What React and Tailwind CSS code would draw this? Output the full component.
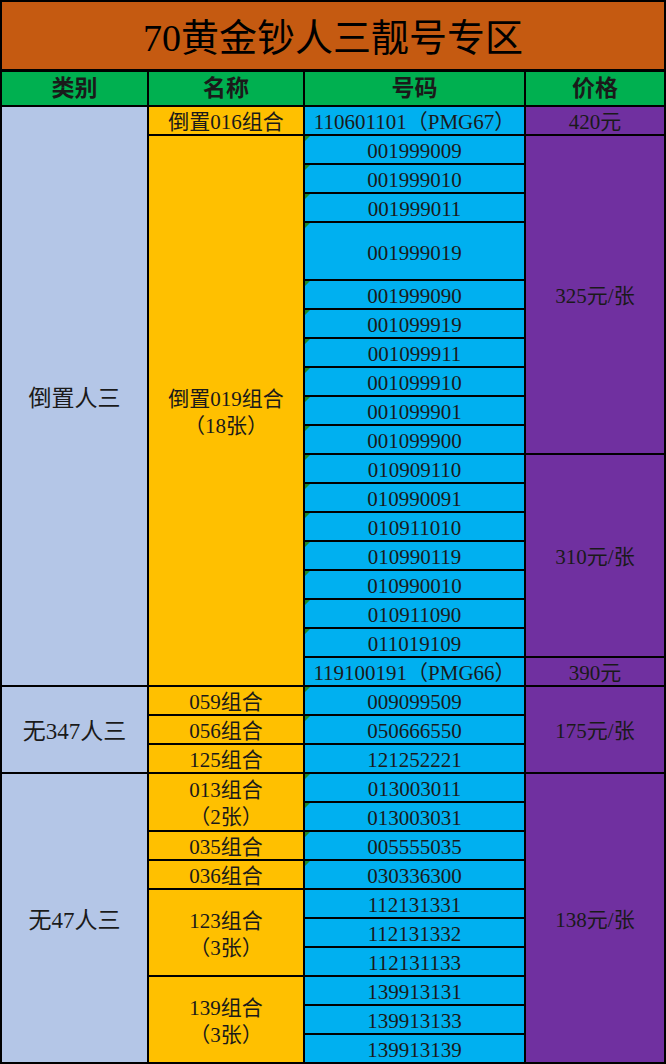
const rows = [
  { cls: "col-start-1 row-span-20 bg-[#b4c6e7] text-[23px]", text: "倒置人三" },
  { cls: "col-start-2 bg-[#ffc000]", text: "倒置016组合" },
  { cls: "col-start-3 bg-[#00b0f0]", text: "110601101（PMG67）" },
  { cls: "col-start-4 bg-[#7030a0]", text: "420元" },
  { cls: "col-start-2 row-span-19 bg-[#ffc000]", text: "倒置019组合", sub: "（18张）" },
  { cls: "col-start-3 bg-[#00b0f0]", text: "001999009", mark: true },
  { cls: "col-start-4 row-span-11 bg-[#7030a0]", text: "325元/张" },
  { cls: "col-start-3 bg-[#00b0f0]", text: "001999010", mark: true },
  { cls: "col-start-3 bg-[#00b0f0]", text: "001999011", mark: true },
  { cls: "col-start-3 row-span-2 bg-[#00b0f0]", text: "001999019", mark: true },
  { cls: "col-start-3 bg-[#00b0f0]", text: "001999090", mark: true },
  { cls: "col-start-3 bg-[#00b0f0]", text: "001099919", mark: true },
  { cls: "col-start-3 bg-[#00b0f0]", text: "001099911", mark: true },
  { cls: "col-start-3 bg-[#00b0f0]", text: "001099910", mark: true },
  { cls: "col-start-3 bg-[#00b0f0]", text: "001099901", mark: true },
  { cls: "col-start-3 bg-[#00b0f0]", text: "001099900", mark: true },
  { cls: "col-start-3 bg-[#00b0f0]", text: "010909110", mark: true },
  { cls: "col-start-4 row-span-7 bg-[#7030a0]", text: "310元/张" },
  { cls: "col-start-3 bg-[#00b0f0]", text: "010990091", mark: true },
  { cls: "col-start-3 bg-[#00b0f0]", text: "010911010", mark: true },
  { cls: "col-start-3 bg-[#00b0f0]", text: "010990119", mark: true },
  { cls: "col-start-3 bg-[#00b0f0]", text: "010990010", mark: true },
  { cls: "col-start-3 bg-[#00b0f0]", text: "010911090", mark: true },
  { cls: "col-start-3 bg-[#00b0f0]", text: "011019109", mark: true },
  { cls: "col-start-3 bg-[#00b0f0]", text: "119100191（PMG66）" },
  { cls: "col-start-4 bg-[#7030a0]", text: "390元" },
  { cls: "col-start-1 row-span-3 bg-[#b4c6e7] text-[23px]", text: "无347人三" },
  { cls: "col-start-2 bg-[#ffc000]", text: "059组合" },
  { cls: "col-start-3 bg-[#00b0f0]", text: "009099509", mark: true },
  { cls: "col-start-4 row-span-3 bg-[#7030a0]", text: "175元/张" },
  { cls: "col-start-2 bg-[#ffc000]", text: "056组合" },
  { cls: "col-start-3 bg-[#00b0f0]", text: "050666550", mark: true },
  { cls: "col-start-2 bg-[#ffc000]", text: "125组合" },
  { cls: "col-start-3 bg-[#00b0f0]", text: "121252221" },
  { cls: "col-start-1 row-span-10 bg-[#b4c6e7] text-[23px]", text: "无47人三" },
  { cls: "col-start-2 row-span-2 bg-[#ffc000]", text: "013组合", sub: "（2张）" },
  { cls: "col-start-3 bg-[#00b0f0]", text: "013003011", mark: true },
  { cls: "col-start-4 row-span-10 bg-[#7030a0]", text: "138元/张" },
  { cls: "col-start-3 bg-[#00b0f0]", text: "013003031", mark: true },
  { cls: "col-start-2 bg-[#ffc000]", text: "035组合" },
  { cls: "col-start-3 bg-[#00b0f0]", text: "005555035", mark: true },
  { cls: "col-start-2 bg-[#ffc000]", text: "036组合" },
  { cls: "col-start-3 bg-[#00b0f0]", text: "030336300", mark: true },
  { cls: "col-start-2 row-span-3 bg-[#ffc000]", text: "123组合", sub: "（3张）" },
  { cls: "col-start-3 bg-[#00b0f0]", text: "112131331" },
  { cls: "col-start-3 bg-[#00b0f0]", text: "112131332" },
  { cls: "col-start-3 bg-[#00b0f0]", text: "112131133" },
  { cls: "col-start-2 row-span-3 bg-[#ffc000]", text: "139组合", sub: "（3张）" },
  { cls: "col-start-3 bg-[#00b0f0]", text: "139913131" },
  { cls: "col-start-3 bg-[#00b0f0]", text: "139913133" },
  { cls: "col-start-3 bg-[#00b0f0]", text: "139913139" },
];

const headers = ["类别", "名称", "号码", "价格"];

const Cell = ({ cell }) => (
  <div className={`relative flex flex-col items-center justify-center pt-[4px] text-[21px] leading-[27px] ${cell.cls}`}>
    {cell.mark && (
      <span className="absolute top-0 left-0 w-0 h-0 border-t-[5px] border-r-[5px] border-t-[#1e8a2a] border-r-transparent" />
    )}
    <span>{cell.text}</span>
    {cell.sub && <span>{cell.sub}</span>}
  </div>
);

export default function App() {
  return (
    <div className="w-[666px] h-[1064px] bg-black p-[2px] grid gap-[2px] grid-cols-[145px_154px_219px_138px] grid-rows-[68px_33px_repeat(33,27px)] text-[#1a1a1a] font-['Liberation_Serif','Noto_Sans_CJK_SC',serif]">
      <div className="col-span-4 mb-[1px] flex items-center justify-center pt-[6px] bg-[#c55a11] text-[38px] text-black">
        70黄金钞人三靓号专区
      </div>
      {headers.map((h) => (
        <div key={h} className="flex items-center justify-center pt-[2px] bg-[#00b050] text-[23px] font-bold text-[#1a1a1a]">
          {h}
        </div>
      ))}
      {rows.map((cell, i) => (
        <Cell key={i} cell={cell} />
      ))}
    </div>
  );
}
